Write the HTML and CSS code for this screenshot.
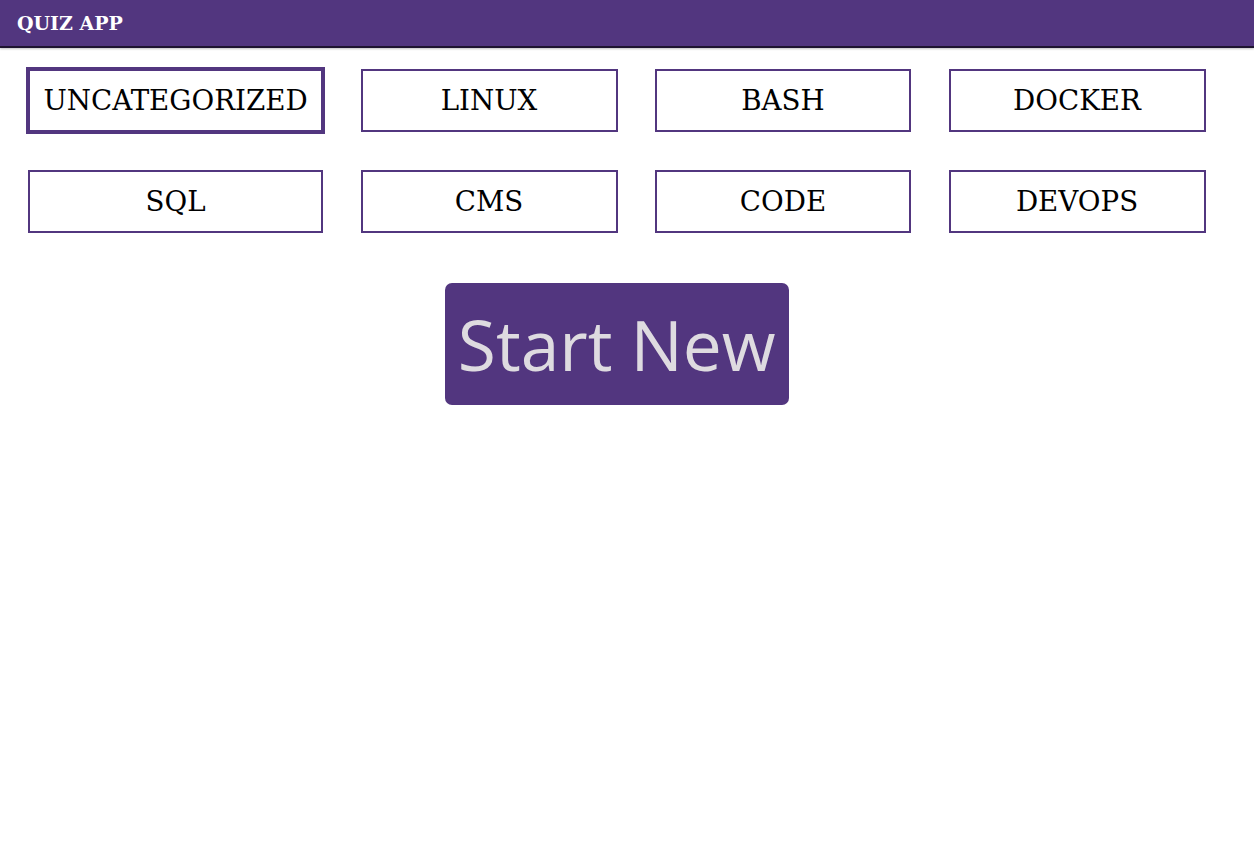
FILE: index.html
```html
<!DOCTYPE html>
<html>
<head>
<meta charset="utf-8">
<title>Quiz App</title>
<link rel="stylesheet" href="styles.css">
</head>
<body>
<header class="topbar">
  <span class="brand">QUIZ APP</span>
</header>
<main class="content">
  <div class="categories">
    <button class="cat cat-active">UNCATEGORIZED</button>
    <button class="cat">LINUX</button>
    <button class="cat">BASH</button>
    <button class="cat">DOCKER</button>
    <button class="cat">SQL</button>
    <button class="cat">CMS</button>
    <button class="cat">CODE</button>
    <button class="cat">DEVOPS</button>
  </div>
  <div class="actions">
    <button class="start">Start New</button>
  </div>
</main>
</body>
</html>
```
FILE: styles.css
```css
html, body {
  margin: 0;
  padding: 0;
  background: #ffffff;
  font-family: "DejaVu Serif", serif;
}

.topbar {
  height: 46px;
  background: #52367f;
  border-bottom: 2px solid #1e1430;
  box-shadow: 0 1px 2px rgba(0,0,0,0.25);
  display: flex;
  align-items: center;
  padding-left: 17px;
}

.brand {
  color: #ffffff;
  font-weight: bold;
  font-size: 19px;
}

.content {
  width: fit-content;
  margin-left: 28px;
  padding-top: 21px;
}

.categories {
  display: grid;
  grid-template-columns: 295px 257px 256px 257px;
  column-gap: 37.5px;
  row-gap: 38px;
}

.cat {
  height: 63px;
  background: #ffffff;
  border: 2px solid #52367f;
  font-family: "DejaVu Serif", serif;
  font-size: 27.7px;
  color: #000000;
  padding: 0;
}

.cat-active {
  outline: 2px solid #52367f;
}

.actions {
  display: flex;
  justify-content: center;
  padding-top: 50px;
}

.start {
  background: #52367f;
  color: #dedbe0;
  border: none;
  border-radius: 7px;
  font-family: "Open Sans", sans-serif;
  font-size: 69.5px;
  height: 122px;
  padding: 0 13px;
}
```
